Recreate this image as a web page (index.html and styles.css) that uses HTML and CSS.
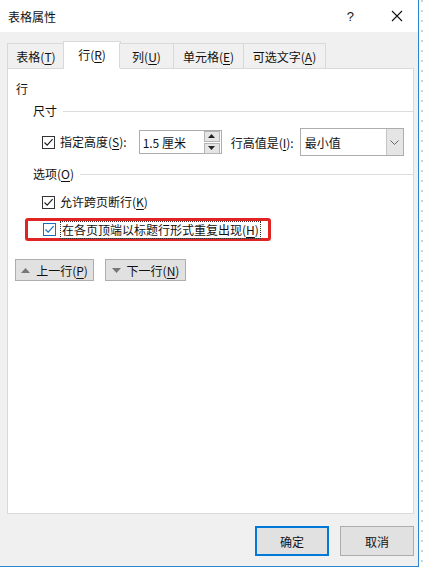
FILE: index.html
```html
<!DOCTYPE html>
<html lang="zh-CN">
<head>
    <meta charset="UTF-8">
    <title>表格属性</title>
    <link rel="stylesheet" href="styles.css">
</head>
<body>

    <!-- Table Properties dialog -->
    <div class="dialog">
        <div class="titlebar">
            <span class="title">表格属性</span>
            <span class="help">?</span>
            <span class="close">
                <svg width="12" height="12" viewBox="0 0 12 12"><path d="M1 1 L11 11 M11 1 L1 11" stroke="#111" stroke-width="1.1" fill="none"/></svg>
            </span>
        </div>

        <!-- Tabs -->
        <div class="tabs">
            <div class="tab w1">表格(<u>T</u>)</div>
            <div class="tab w2 active">行(<u>R</u>)</div>
            <div class="tab w3">列(<u>U</u>)</div>
            <div class="tab w4">单元格(<u>E</u>)</div>
            <div class="tab w5">可选文字(<u>A</u>)</div>
        </div>

        <!-- Row tab page -->
        <div class="panel">
            <div class="heading">行</div>

            <div class="group-title"><span>尺寸</span><i class="rule"></i></div>

            <div class="size-row">
                <label class="check">
                    <span class="box"><svg width="11" height="11" viewBox="0 0 11 11"><path d="M1.5 5.5 L4.2 8.2 L9.6 2.2" stroke="#222" stroke-width="1.2" fill="none"/></svg></span>
                    <span>指定高度(<u>S</u>):</span>
                </label>
                <div class="spin">
                    <span class="spin-value">1.5 厘米</span>
                    <div class="spin-btns">
                        <span class="spin-btn"><svg width="7" height="4" viewBox="0 0 7 4"><path d="M0 4 L3.5 0 L7 4 Z" fill="#222"/></svg></span>
                        <span class="spin-btn"><svg width="7" height="4" viewBox="0 0 7 4"><path d="M0 0 L3.5 4 L7 0 Z" fill="#222"/></svg></span>
                    </div>
                </div>
                <span class="lbl">行高值是(<u>I</u>):</span>
                <div class="select">
                    <span class="select-value">最小值</span>
                    <span class="drop"><svg width="9" height="5" viewBox="0 0 9 5"><path d="M0.5 0.5 L4.5 4.5 L8.5 0.5" stroke="#666" stroke-width="1" fill="none"/></svg></span>
                </div>
            </div>

            <div class="group-title"><span>选项(<u>O</u>)</span><i class="rule"></i></div>

            <label class="check opt">
                <span class="box"><svg width="11" height="11" viewBox="0 0 11 11"><path d="M1.5 5.5 L4.2 8.2 L9.6 2.2" stroke="#222" stroke-width="1.2" fill="none"/></svg></span>
                <span>允许跨页断行(<u>K</u>)</span>
            </label>

            <div class="highlight">
                <label class="check hover">
                    <span class="box"><svg width="11" height="11" viewBox="0 0 11 11"><path d="M1.5 5.5 L4.2 8.2 L9.6 2.2" stroke="#1a6fc4" stroke-width="1.2" fill="none"/></svg></span>
                    <span class="focus">在各页顶端以标题行形式重复出现(<u>H</u>)</span>
                </label>
            </div>

            <div class="nav-row">
                <button class="btn nav"><svg width="9" height="5" viewBox="0 0 9 5"><path d="M0 5 L4.5 0 L9 5 Z" fill="#777"/></svg><span>上一行(<u>P</u>)</span></button>
                <button class="btn nav"><svg width="9" height="5" viewBox="0 0 9 5"><path d="M0 0 L4.5 5 L9 0 Z" fill="#777"/></svg><span>下一行(<u>N</u>)</span></button>
            </div>
        </div>

        <!-- Dialog buttons -->
        <div class="footer">
            <button class="btn action default">确定</button>
            <button class="btn action">取消</button>
        </div>
    </div>

</body>
</html>
```

FILE: styles.css
```css
body {
    margin: 0;
    font-family: "Noto Sans CJK SC", "Liberation Sans", sans-serif;
    font-size: 12px;
    color: #111;
    background-color: #fff;
    background-image: repeating-linear-gradient(180deg, #c9d3de 0 2px, transparent 2px 10px);
    background-size: 2px 100%;
    background-position: 421px 0;
    background-repeat: no-repeat;
}

u {
    text-decoration: underline;
    text-underline-offset: 2px;
}

/* Dialog frame */
.dialog {
    width: 418px;
    height: 566px;
    background: #f0f0f0;
    border-right: 1px solid #2b84d2;
    border-bottom: 1px solid #2b84d2;
    display: flex;
    flex-direction: column;
}

.titlebar {
    height: 32px;
    background: #fff;
    display: flex;
    align-items: center;
    padding-left: 8px;
}

.title {
    flex: 1;
    font-size: 12px;
}

.help {
    font-family: "Liberation Sans", sans-serif;
    font-size: 13px;
    margin-right: 37px;
}

.close {
    display: flex;
    margin-right: 15px;
}

/* Tabs */
.tabs {
    display: flex;
    align-items: flex-end;
    margin-top: 9px;
    padding-left: 7px;
    height: 27px;
    position: relative;
    z-index: 1;
}

.tab {
    height: 24px;
    border: 1px solid #d9d9d9;
    border-bottom: none;
    margin-left: -1px;
    display: flex;
    align-items: center;
    justify-content: center;
    background: #f0f0f0;
}

.tab:first-child {
    margin-left: 0;
}

.tab.active {
    height: 28px;
    margin-bottom: -1px;
    background: #fff;
    margin-left: -2px;
    margin-right: -1px;
    padding-bottom: 2px;
    box-sizing: border-box;
}

.w1 { width: 56px; }
.w2 { width: 58px; }
.w3 { width: 53px; }
.w4 { width: 69px; }
.w5 { width: 81px; }

/* Tab page */
.panel {
    margin: 0 4px 0 7px;
    height: 444px;
    background: #fff;
    border: 1px solid #d9d9d9;
    padding-left: 8px;
    display: flex;
    flex-direction: column;
    align-items: flex-start;
}

.heading {
    margin-top: 12px;
    line-height: 16px;
}

.group-title {
    display: flex;
    align-items: center;
    align-self: stretch;
    margin-left: 17px;
    margin-top: 6px;
    line-height: 16px;
}

.group-title .rule {
    flex: 1;
    height: 1px;
    background: #dcdcdc;
    margin-left: 6px;
}

.size-row + .group-title {
    margin-top: 10px;
}

.size-row {
    display: flex;
    align-items: center;
    margin-top: 9px;
    margin-left: 26px;
    height: 28px;
}

.check {
    display: flex;
    align-items: center;
    line-height: 16px;
}

.box {
    width: 11px;
    height: 11px;
    border: 1px solid #333;
    background: #fff;
    display: flex;
    margin-right: 5px;
}

.check.opt {
    margin-left: 26px;
    margin-top: 12px;
}

.check.hover .box {
    border-color: #1a6fc4;
}

.spin {
    width: 81px;
    height: 22px;
    border: 1px solid #adadad;
    margin-left: 12px;
    display: flex;
    align-items: center;
    justify-content: space-between;
}

.spin-value {
    padding-left: 3px;
}

.spin-btns {
    display: flex;
    flex-direction: column;
    gap: 1px;
    margin-right: 1px;
}

.spin-btn {
    width: 14px;
    height: 9px;
    background: #e5e5e5;
    border: 1px solid #b5b5b5;
    display: flex;
    align-items: center;
    justify-content: center;
}

.lbl {
    margin-left: 9px;
}

.select {
    width: 102px;
    height: 26px;
    border: 1px solid #adadad;
    margin-left: 6px;
    display: flex;
    align-items: center;
    justify-content: space-between;
}

.select-value {
    padding-left: 4px;
}

.drop {
    width: 16px;
    height: 26px;
    background: #e5e5e5;
    border-left: 1px solid #c4c4c4;
    display: flex;
    align-items: center;
    justify-content: center;
}

/* Red annotation frame round the last option */
.highlight {
    margin-top: 8px;
    margin-left: 9px;
    width: 225px;
    height: 17px;
    border: 3px solid #e02423;
    border-radius: 3px;
    padding-left: 15px;
    display: flex;
    align-items: center;
}

.focus {
    outline: 1px dotted #333;
    outline-offset: 0;
    padding: 0 1px;
    line-height: 16px;
    white-space: nowrap;
}

/* Buttons */
.btn {
    font-family: inherit;
    font-size: 12px;
    color: #111;
    background: #e1e1e1;
    border: 1px solid #adadad;
    padding: 0;
    display: flex;
    align-items: center;
    justify-content: center;
}

.nav-row {
    display: flex;
    gap: 11px;
    margin-top: 18px;
    margin-left: -1px;
}

.btn.nav {
    height: 22px;
    width: 79px;
    gap: 6px;
}

.btn.nav:last-child {
    width: 81px;
}

.footer {
    display: flex;
    justify-content: flex-end;
    gap: 11px;
    margin-top: 12px;
    padding-right: 4px;
}

.btn.action {
    width: 74px;
    height: 30px;
}

.btn.default {
    border: 2px solid #0078d7;
}
```
